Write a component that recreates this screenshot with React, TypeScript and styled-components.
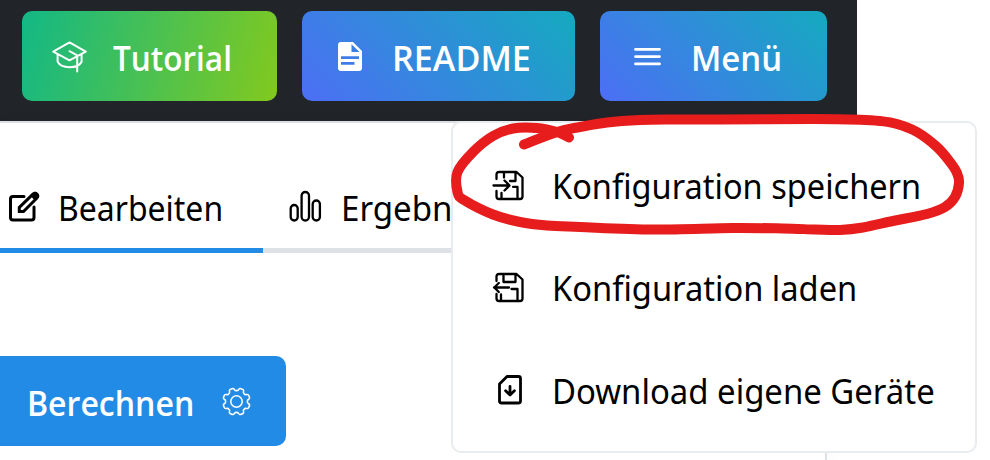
import React from "react";
import styled, { createGlobalStyle } from "styled-components";

const GlobalStyle = createGlobalStyle`
  *, *::before, *::after { box-sizing: border-box; }
  body {
    margin: 0;
    background: #fff;
    color: #000;
    font-family: "Noto Sans", "Open Sans", sans-serif;
    overflow: hidden;
  }
`;

const Page = styled.div`
  position: relative;
  width: 990px;
  height: 460px;
  overflow: hidden;
`;

const Header = styled.header`
  display: flex;
  gap: 25px;
  width: 857px;
  height: 123px;
  padding: 11px 0 0 22px;
  background: #212529;
  border-bottom: 2px solid #dee2e6;
`;

const ActionButton = styled.button<{ $width: number; $fill: string; $pad: number; $radius?: string }>`
  display: flex;
  align-items: center;
  width: ${(p) => p.$width}px;
  height: 90px;
  padding: 0 0 0 ${(p) => p.$pad}px;
  border: 0;
  border-radius: ${(p) => p.$radius ?? "10px"};
  background: ${(p) => p.$fill};
  color: #fff;
  font-family: "Open Sans", "Noto Sans", sans-serif;
  font-weight: 600;
`;

const Label = styled.span<{ $condense: number; $before?: number; $after?: number }>`
  margin-left: ${(p) => p.$before ?? 0}px;
  margin-right: ${(p) => p.$after ?? 0}px;
  padding-top: 3px;
  font-size: 35px;
  line-height: 48px;
  white-space: nowrap;
  transform: scaleX(${(p) => p.$condense});
  transform-origin: left center;
`;

const MenuLabel = styled(Label)`
  padding-top: 2px;
`;

const Glyph = styled.svg`
  display: block;
  flex: none;
  overflow: visible;
  fill: none;
  stroke: currentColor;
  stroke-linecap: round;
  stroke-linejoin: round;
`;

const Content = styled.main`
  width: 827px;
  height: 337px;
  border-right: 2px solid #dee2e6;
  box-shadow: 3px 0 20px rgba(0, 0, 0, 0.03);
`;

const Tabs = styled.nav`
  display: flex;
  height: 130px;
  padding-top: 42px;
`;

const Tab = styled.div<{ $width: number; $pad: number; $active?: boolean }>`
  display: flex;
  align-items: center;
  width: ${(p) => p.$width}px;
  padding-left: ${(p) => p.$pad}px;
  border-bottom: 5px solid ${(p) => (p.$active ? "#228be6" : "#dee2e6")};
`;

const Actions = styled.div`
  padding-top: 103px;
`;

const Menu = styled.div`
  position: absolute;
  left: 451px;
  top: 121px;
  display: flex;
  flex-direction: column;
  width: 526px;
  height: 332px;
  padding: 11px 0 0 40px;
  border: 2px solid #e9ecef;
  border-radius: 10px;
  background: #fff;
`;

const MenuItem = styled.div<{ $indent?: number }>`
  display: flex;
  align-items: center;
  height: 102.3px;
  padding-left: ${(p) => p.$indent ?? 0}px;
`;

const Annotation = styled.svg`
  position: absolute;
  inset: 0;
  pointer-events: none;
`;

const GraduationIcon = () => (
  <Glyph width="36" height="32" viewBox="0 0 36 32" strokeWidth="2">
    <path d="M1.2 11.7 17.5 2.4l16.3 9.3-16.3 8.6ZM17.5 11.2l7.7 4.2v16M5.6 14.5v7.2C9 29 26 29 29.6 21.7V14.5" />
  </Glyph>
);

const DocumentIcon = () => (
  <Glyph width="24" height="29" viewBox="0 0 24 29">
    <path
      fill="currentColor"
      stroke="none"
      fillRule="evenodd"
      d="M3 0h12l9 9v17a3 3 0 0 1-3 3H3a3 3 0 0 1-3-3V3a3 3 0 0 1 3-3Zm10.5 2.2V10h8ZM3 14.2V17h18v-2.8ZM3 20v2.7h13.5V20Z"
    />
  </Glyph>
);

const BurgerIcon = () => (
  <Glyph width="27" height="20" viewBox="0 0 27 20" strokeWidth="2.8">
    <path d="M1.5 3.4h24M1.5 10.6h24M1.5 17.9h24" />
  </Glyph>
);

const EditIcon = () => (
  <Glyph width="32" height="31" viewBox="0 0 32 31" strokeWidth="3">
    <path d="M15 5.5H4Q1.500 5.500 1.500 8V26.500Q1.500 29 4 29H22.500Q25 29 25 26.500V16" />
    <path strokeLinejoin="miter" d="M10.3 20.5v-4.2L23.7 3.3Q25.8 1.300 27.900 3.300 29.700 5.300 27.700 7.300L14.500 20.500Z" />
    <path fill="currentColor" stroke="none" d="m21 4.500 2.800-2.800q2.400-2 5 .3 2.500 2.600.4 5l-2.900 2.900Z" />
  </Glyph>
);

const BarsIcon = () => (
  <Glyph width="32" height="32" viewBox="0 0 32 32" strokeWidth="2.3">
    <rect x="0.7" y="14" width="7" height="15.5" rx="3.5" />
    <rect x="11.6" y="1" width="7.4" height="28.5" rx="3.7" />
    <rect x="22.7" y="9.5" width="7.2" height="20" rx="3.6" />
  </Glyph>
);

const GearIcon = () => {
  // Eight rounded teeth around the centre, with a gap facing straight up.
  const teeth = Array.from({ length: 8 }, (_, i) => i * 45 + 22.5);
  const at = (deg: number, r: number) => {
    const a = ((deg - 90) * Math.PI) / 180;
    return `${(15 + r * Math.cos(a)).toFixed(2)} ${(15 + r * Math.sin(a)).toFixed(2)}`;
  };
  const outline =
    `M${at(0, 11.3)}` +
    teeth
      .map(
        (t) =>
          `Q${at(t - 15, 11)} ${at(t - 12, 12.8)}Q${at(t - 9, 14.7)} ${at(t, 14)}` +
          `Q${at(t + 9, 14.7)} ${at(t + 12, 12.8)}Q${at(t + 15, 11)} ${at(t + 22.5, 11.3)}`,
      )
      .join("") +
    "Z";
  return (
    <Glyph width="29" height="29" viewBox="0 0 30 30" strokeWidth="1.6">
      <path d={outline} />
      <circle cx="15" cy="15" r="5.9" />
    </Glyph>
  );
};

const SaveIcon = () => (
  <Glyph width="32" height="31" viewBox="0 0 32 31" strokeWidth="2.3" strokeLinecap="butt">
    <path d="M3.5 9V4.5Q3.5 2 6 2H23.5l6 5.5V26.5Q29.5 29 27 29H6Q3.5 29 3.5 26.5V21M11 2v5.5M22.5 2v9H17M8.500 29v-6M24.500 29V16.800H20" />
    <path d="M.5 15.5H16M11.5 10.5l5 5-5 5" />
  </Glyph>
);

const LoadIcon = () => (
  <Glyph width="32" height="31" viewBox="0 0 32 31" strokeWidth="2.3" strokeLinecap="butt">
    <path d="M3.5 9V4.5Q3.5 2 6 2H23.5l6 5.5V26.5Q29.5 29 27 29H6Q3.5 29 3.5 26.5V22M10.5 2v8h12V2M8 29v-6.5M24.500 29V17H18.500" />
    <path d="M16 15.5H1M5.800 11l-4.500 4.500 4.500 4.500" />
  </Glyph>
);

const DownloadIcon = () => (
  <Glyph width="24" height="30" viewBox="0 0 24 30" strokeWidth="2.8">
    <path d="M9 1.5H20.500Q22.500 1.500 22.500 3.500V26Q22.500 28 20.500 28H3.500Q1.500 28 1.500 26V9Z" />
    <path d="M12 11.500v8M7.600 15.800l4.400 4.200 4.400-4.200" />
  </Glyph>
);

const loop: [number, number][] = [
  [524, 144.5], [557, 132], [580, 127], [607, 122.5], [640, 120], [673, 119.5],
  [720, 119.5], [813, 119], [860, 119.7], [880, 121], [897, 124], [917, 132], [937, 147],
  [950, 162], [957, 173], [959, 183], [955, 197], [945, 207], [927, 214],
  [893, 221], [863, 227.5], [840, 230], [815, 229.5], [783, 228.5], [733, 228], [653, 229.5], [580, 227],
  [547, 225.5], [520, 222], [493, 214.5], [464, 200], [457.5, 192], [457.5, 172], [473, 152],
  [493, 136], [513, 128.5], [537, 128], [557, 132], [569, 137.5],
];

// Catmull-Rom interpolation keeps the marker stroke smooth through its points.
const smoothPath = (pts: [number, number][]) =>
  pts.slice(1).reduce((d, p, i) => {
    const a = pts[Math.max(0, i - 1)];
    const b = pts[i];
    const c = pts[Math.min(pts.length - 1, i + 2)];
    const x1 = b[0] + (p[0] - a[0]) / 6;
    const y1 = b[1] + (p[1] - a[1]) / 6;
    const x2 = p[0] - (c[0] - b[0]) / 6;
    const y2 = p[1] - (c[1] - b[1]) / 6;
    return `${d}C${x1} ${y1} ${x2} ${y2} ${p[0]} ${p[1]}`;
  }, `M${pts[0][0]} ${pts[0][1]}`);

const green = "linear-gradient(105deg, #12b886 0%, #82c91e 100%)";
const blue = "linear-gradient(45deg, #4c6ef5 0%, #15aabf 100%)";

export default function App() {
  return (
    <Page>
      <GlobalStyle />
      <Header>
        <ActionButton $width={255} $pad={30} $fill={green}>
          <GraduationIcon />
          <Label $before={24.5} $condense={0.9}>Tutorial</Label>
        </ActionButton>
        <ActionButton $width={273} $pad={35.5} $fill={blue}>
          <DocumentIcon />
          <Label $before={30} $condense={0.975}>README</Label>
        </ActionButton>
        <ActionButton $width={227} $pad={34} $fill={blue}>
          <BurgerIcon />
          <Label $before={29.5} $condense={0.94}>Menü</Label>
        </ActionButton>
      </Header>
      <Content>
        <Tabs>
          <Tab $active $width={263} $pad={8.5}>
            <EditIcon />
            <Label $before={17} $condense={0.913}>Bearbeiten</Label>
          </Tab>
          <Tab $width={562} $pad={27}>
            <BarsIcon />
            <Label $before={18.5} $condense={0.945}>Ergebnisse</Label>
          </Tab>
        </Tabs>
        <Actions>
          <ActionButton $width={286} $pad={27} $fill="#228be6" $radius="0 10px 10px 0">
            <Label $condense={0.915} $after={12.5}>Berechnen</Label>
            <GearIcon />
          </ActionButton>
        </Actions>
      </Content>
      <Menu>
        <MenuItem>
          <SaveIcon />
          <MenuLabel $before={27} $condense={0.93}>Konfiguration speichern</MenuLabel>
        </MenuItem>
        <MenuItem>
          <LoadIcon />
          <MenuLabel $before={27} $condense={0.933}>Konfiguration laden</MenuLabel>
        </MenuItem>
        <MenuItem $indent={4.5}>
          <DownloadIcon />
          <MenuLabel $before={30.5} $condense={0.94}>Download eigene Geräte</MenuLabel>
        </MenuItem>
      </Menu>
      <Annotation width="990" height="460" viewBox="0 0 990 460">
        <path d={smoothPath(loop)} fill="none" stroke="#e71d1d" strokeWidth="10" strokeLinecap="round" strokeLinejoin="round" />
      </Annotation>
    </Page>
  );
}
